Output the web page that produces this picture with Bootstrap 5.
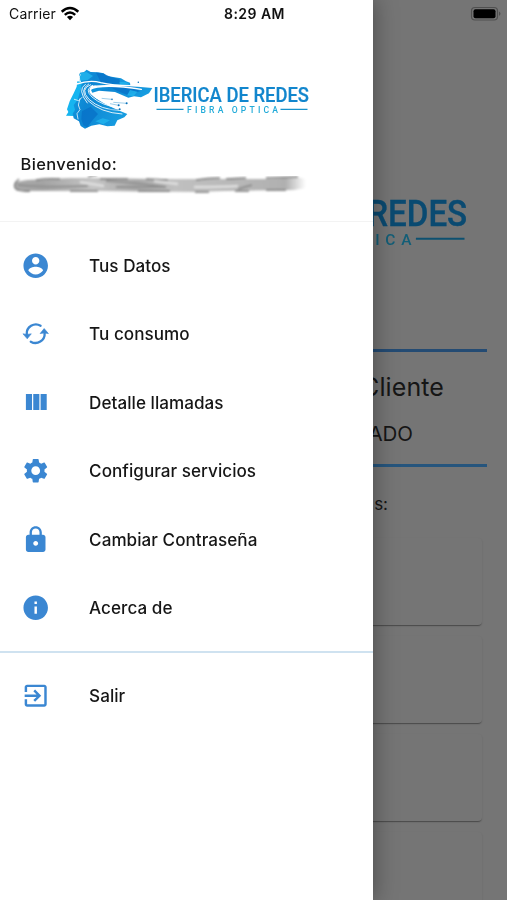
<!DOCTYPE html>
<html lang="es">
<head>
<meta charset="utf-8">
<meta name="viewport" content="width=device-width, initial-scale=1">
<title>Ibérica de Redes</title>
<link href="https://cdn.jsdelivr.net/npm/bootstrap@5.3.0/dist/css/bootstrap.min.css" rel="stylesheet">
<style>
body{font-family:Inter,"Liberation Sans",sans-serif;color:#161616;background:#757575}
.screen{width:507px;height:900px;background:#757575}
.page-content{padding:164px 20px 0 21px}
.page-logo{width:441px;height:112px;margin-left:7px;filter:brightness(.55)}
.page-logo,.head-logo,#logo{overflow:visible}
.rule{height:3px;background:#244b73}
.rule-top{margin-top:73px}
.client-title{font-size:25px;line-height:30px;margin-top:20px;padding-right:43px;letter-spacing:.1px}
.client-name{font-size:20.5px;line-height:26px;margin-top:19px;padding-right:74px}
.rule-bottom{margin-top:16.5px;background:#26557d}
.services{font-size:17px;line-height:22px;margin-top:26px;padding-right:99px}
.service-card{height:87px;margin:0 5px 11px 0;border-radius:4px;background:#757575;box-shadow:0 2px 1px -1px rgba(0,0,0,.22),0 1px 1px rgba(0,0,0,.1),0 1px 2px rgba(0,0,0,.1)}
.card-stack{margin-top:23px}
.drawer{width:372.5px;z-index:2;background:#fff;box-shadow:0 0 22px 1px rgba(0,0,0,.36)}
.status{height:27px;z-index:3;color:#111}
.carrier{font-size:14px;letter-spacing:.15px;padding-left:9px;width:215px}
.clock{font-size:14px;font-weight:600;letter-spacing:.45px;width:79px}
.drawer-head{height:222px;padding-top:68px;border-bottom:1.5px solid #f3f3f3}
.head-logo{width:245px;height:62px;margin-left:65px}
.welcome{font-size:16.5px;font-weight:500;line-height:22px;margin:23px 0 0 20.5px;letter-spacing:.38px}
.scribble{margin:1px 0 0 10px}
.menu{padding-top:9.6px}
.menu-row{height:68.4px;padding-left:20.5px;font-size:17.1px;font-weight:500;letter-spacing:.04px;color:#161616}
.menu-row svg{width:29.4px;height:29.4px;fill:#3b87d2;margin-right:39.2px;flex:none}
.menu-rule{height:2px;background:#cfe2f0;margin:9.2px 0 8.8px}
</style>
<script src="https://cdn.jsdelivr.net/npm/bootstrap@5.3.0/dist/js/bootstrap.bundle.min.js"></script>
</head>
<body class="overflow-hidden">
<svg class="position-absolute" width="0" height="0">
<defs>
<linearGradient id="sea" x1="0" x2="1" y1="0" y2=".3"><stop offset="0" stop-color="#129fe2"/><stop offset=".35" stop-color="#0e86d3"/><stop offset="1" stop-color="#169ce0"/></linearGradient>
</defs>
<symbol id="logo" viewBox="65 68 245 62">
<g transform="translate(60 64) scale(.3333)">
<path fill="url(#sea)" d="M57 34l3-8 12-2 8-7 12 7 22 1 17 3 8 7 20 4 24 4 15 9 12 4 1 8-60-2-60 3-24 15-10 14 8 12-6-4 4-50z"/>
<path fill="#16b5f0" d="M52 52l14 2-4 22 2 18-8 16-3 18-10 16-2 12-23-1 7-11-4-8 8-24 12-24 9-20z"/>
<path fill="url(#sea)" d="M92 76q10-9 46-10l60-1 79 7-10 16-24 12-21-3-17 4-40-17-48-4-20 6z"/>
<path fill="url(#sea)" d="M62 78q8-22 36-18-16 14-3 30 15 23 107 60l-9 10-21 9-8 16-22 2-24-6-24 4-19 9-13-8-5-14-16-9-3-14 7-12-4-14 12-16 5-18z"/>
<path fill="#0872c8" d="M108 26l24 3 20 10 26 6 4 14-40 2-20-8zM150 68l70 2 20 12-40 10-30-12zM66 142l26-14 22 22-18 20-14 20-12-6-6-18z" opacity=".8"/>
<path fill="#22b5ee" d="M61 27l18-3 20 12-16 12-24 2zM106 172l22-9 22 6-20 12zM210 78l22 5-12 14-18-3zM178 53l20 2 10 6-28 2z" opacity=".8"/>
<g fill="none" stroke="#fff" stroke-linecap="round">
<path stroke-width="4" d="M50 60q40-13 72-4 50 12 125 8M244 76Q158 62 112 69q-32 5-17 21 20 22 78 30"/>
<path stroke-width="2.600" d="M92 62q-34 13-5 44 34 32 93 33M86 60q-30 18-2 50 38 36 102 40M76 61q-26 16 6 56M98 64q-26 12-2 35 30 26 82 33M105 66q-28 10-5 29 26 20 62 18"/>
<path stroke-width="2.200" d="M43 106l13 4 10-10M60 104l-5 19 5 14-9 12 3 16M53 50l8-18"/>
</g>
<g stroke="#3d9cd4" stroke-width="1.500"><path d="M125 103l30 3M150 119l26 5M160 115l40 3M145 136l33 1"/></g>
<g fill="#0870ba"><circle cx="156" cy="106" r="2.500"/><circle cx="176" cy="124" r="3"/><circle cx="200" cy="118" r="3"/><circle cx="179" cy="136" r="3"/><circle cx="235" cy="55" r="2.300"/></g>
</g>
<g font-family="Roboto,'Liberation Sans',sans-serif">
<text x="153.500" y="102.400" font-size="20.800" font-weight="500" fill="#1286cd" stroke="#1286cd" stroke-width=".2" textLength="155.500" lengthAdjust="spacingAndGlyphs">IBERICA DE REDES</text>
<text x="187" y="112.700" font-size="8.600" font-weight="500" fill="#22abd9" textLength="91" lengthAdjust="spacing">FIBRA OPTICA</text>
</g>
<path d="M156.500 109.400h27M280.500 109.400h27" stroke="#1792cc" stroke-width="1.100"/>
</symbol>
</svg>
<div class="screen position-relative overflow-hidden">
<main class="page-content">
<svg class="page-logo d-block"><use href="#logo"/></svg>
<div class="rule rule-top"></div>
<div class="client-title text-end">Cliente</div>
<div class="client-name text-end">ADO</div>
<div class="rule rule-bottom"></div>
<div class="services text-end">s:</div>
<div class="card-stack">
<div class="service-card"></div><div class="service-card"></div><div class="service-card"></div><div class="service-card"></div>
</div>
</main>

<aside class="drawer position-absolute top-0 start-0 h-100">
<header class="drawer-head">
<svg class="head-logo d-block"><use href="#logo"/></svg>
<div class="welcome">Bienvenido:</div>
<svg class="scribble d-block" width="302" height="20" viewBox="0 0 302 20">
<defs>
<linearGradient id="fade"><stop offset="0" stop-color="#aaa"/><stop offset=".1" stop-color="#a4a4a4"/><stop offset=".27" stop-color="#c4c4c4"/><stop offset=".42" stop-color="#aaa"/><stop offset=".55" stop-color="#c0c0c0"/><stop offset=".75" stop-color="#b8b8b8"/><stop offset=".93" stop-color="#b0b0b0"/><stop offset="1" stop-color="#fff"/></linearGradient>
<filter id="soft" x="-5%" y="-20%" width="110%" height="140%"><feGaussianBlur stdDeviation=".9"/></filter>
</defs>
<g filter="url(#soft)">
<path fill="url(#fade)" d="M5 6l12-2 44-2 30 0 50 1 60 0 60 0 25-2 10 2v9l-12 2-70 1-30 1-100-1-72 0-5 0-3-4z"/>
<g fill="none" stroke="#777" stroke-width="1.300">
<path d="M9 3Q2 9 6 13q6 3 14 2M26 4q12-2 24-1M78 1q4-2 9-2M60 15l28 0M90 3l28 0M136 3l22 1M186 4q12-2 24-2M216 3l20-1M256 2l32-1M128 15l32 0M185 16l14 0M225 15l14 0M256 14l20 0"/>
</g>
<g fill="none" stroke="#909090" stroke-width="2"><path d="M8 9q30 3 70 1M96 5q34 2 60 6-34 0-50 0M228 13l14-4"/></g>
<path d="M70 6l24 4M144 5l24 3M184 11q30 0 44-1" fill="none" stroke="#dedede" stroke-width="2.500"/>
</g>
</svg>
</header>
<nav class="menu">
<div class="menu-row d-flex align-items-center"><svg viewBox="0 0 24 24"><path d="M12 2C6.480 2 2 6.480 2 12s4.480 10 10 10 10-4.480 10-10S17.520 2 12 2zm0 3c1.660 0 3 1.340 3 3s-1.340 3-3 3-3-1.340-3-3 1.340-3 3-3zm0 14.200c-2.500 0-4.710-1.280-6-3.220.030-1.990 4-3.080 6-3.080 1.990 0 5.970 1.090 6 3.080-1.290 1.940-3.500 3.220-6 3.220z"/></svg>Tus Datos</div>
<div class="menu-row d-flex align-items-center"><svg viewBox="0 0 24 24"><path d="M4.700 12.500A7.500 7.500 0 0 1 16 5.500M19.300 11.500A7.500 7.500 0 0 1 8 18.500" fill="none" stroke="#3b87d2" stroke-width="1.900" stroke-linecap="round"/><path d="M1.600 12.100Q4.800 13 8.400 12.100L5.100 16.200zM15.600 11.900Q19.200 11 22.400 11.900L18.900 7.800z" stroke="#3b87d2" stroke-width=".5" stroke-linejoin="round"/></svg>Tu consumo</div>
<div class="menu-row d-flex align-items-center"><svg viewBox="0 0 24 24"><path d="M10 18h5V5h-5v13zm-6 0h5V5H4v13zM16 5v13h5V5h-5z"/></svg>Detalle llamadas</div>
<div class="menu-row d-flex align-items-center"><svg viewBox="0 0 24 24"><path d="M19.140 12.940c.04-.3.06-.61.06-.94 0-.32-.02-.64-.07-.94l2.030-1.580c.18-.14.23-.41.12-.61l-1.920-3.320c-.12-.22-.37-.29-.59-.22l-2.390.96c-.5-.38-1.030-.7-1.620-.94l-.36-2.540c-.04-.24-.24-.41-.48-.41h-3.840c-.24 0-.43.17-.47.41l-.36 2.540c-.59.24-1.130.57-1.620.94l-2.390-.96c-.22-.08-.47 0-.59.22L2.740 8.870c-.12.21-.08.47.12.61l2.030 1.580c-.05.3-.09.63-.09.94s.02.64.07.94l-2.030 1.580c-.18.14-.23.41-.12.61l1.920 3.320c.12.22.37.29.59.22l2.390-.96c.5.38 1.030.7 1.620.94l.36 2.540c.05.24.24.41.48.41h3.840c.24 0 .44-.17.47-.41l.36-2.540c.59-.24 1.130-.56 1.620-.94l2.390.96c.22.08.47 0 .59-.22l1.920-3.320c.12-.22.07-.47-.12-.61l-2.010-1.580zM12 15.600c-1.980 0-3.600-1.620-3.600-3.600s1.620-3.600 3.600-3.600 3.600 1.620 3.600 3.600-1.620 3.600-3.600 3.600z"/></svg>Configurar servicios</div>
<div class="menu-row d-flex align-items-center"><svg viewBox="0 0 24 24"><path d="M18 8h-1V6c0-2.760-2.240-5-5-5S7 3.240 7 6v2H6c-1.100 0-2 .9-2 2v10c0 1.100.9 2 2 2h12c1.100 0 2-.9 2-2V10c0-1.100-.9-2-2-2zm-6 9c-1.100 0-2-.9-2-2s.9-2 2-2 2 .9 2 2-.9 2-2 2zm3.100-9H8.900V6c0-1.710 1.390-3.100 3.100-3.100 1.710 0 3.100 1.390 3.100 3.100v2z"/></svg>Cambiar Contraseña</div>
<div class="menu-row d-flex align-items-center"><svg viewBox="0 0 24 24"><path d="M12 2C6.480 2 2 6.480 2 12s4.480 10 10 10 10-4.480 10-10S17.520 2 12 2zm1 15h-2v-6h2v6zm0-8h-2V7h2v2z"/></svg>Acerca de</div>
<div class="menu-rule"></div>
<div class="menu-row d-flex align-items-center"><svg viewBox="0 0 24 24"><path d="M10.090 15.590L11.500 17l5-5-5-5-1.410 1.410L12.670 11H3v2h9.670l-2.580 2.590zM19 3H5c-1.110 0-2 .9-2 2v4h2V5h14v14H5v-4H3v4c0 1.100.89 2 2 2h14c1.100 0 2-.9 2-2V5c0-1.100-.9-2-2-2z"/></svg>Salir</div>
</nav>
</aside>

<div class="status position-absolute top-0 start-0 w-100 d-flex align-items-center">
<div class="carrier d-flex align-items-center">Carrier
<svg class="ms-1" width="20" height="16" viewBox="0 0 20 16"><g fill="none" stroke="#000" stroke-width="2.500"><path d="M1.700 5.700Q10-1.800 18.300 5.700"/><path d="M4.800 8.900Q10 4.200 15.200 8.900"/></g><path d="M6.900 11Q10 8.500 13.100 11L10 14.300z"/></svg>
</div>
<div class="clock text-center text-nowrap">8:29 AM</div>
<svg class="ms-auto me-1" width="33" height="16" viewBox="0 0 33 16"><rect x="1.500" y="1.500" width="26" height="12.500" rx="3.500" fill="none" stroke="#505050" stroke-width="1.200"/><rect x="3.500" y="3.300" width="22" height="9" rx="2" fill="#000"/><path d="M29 5.500q3 2.200 0 4.500z" fill="#505050"/></svg>
</div>
</div>
</body>
</html>
